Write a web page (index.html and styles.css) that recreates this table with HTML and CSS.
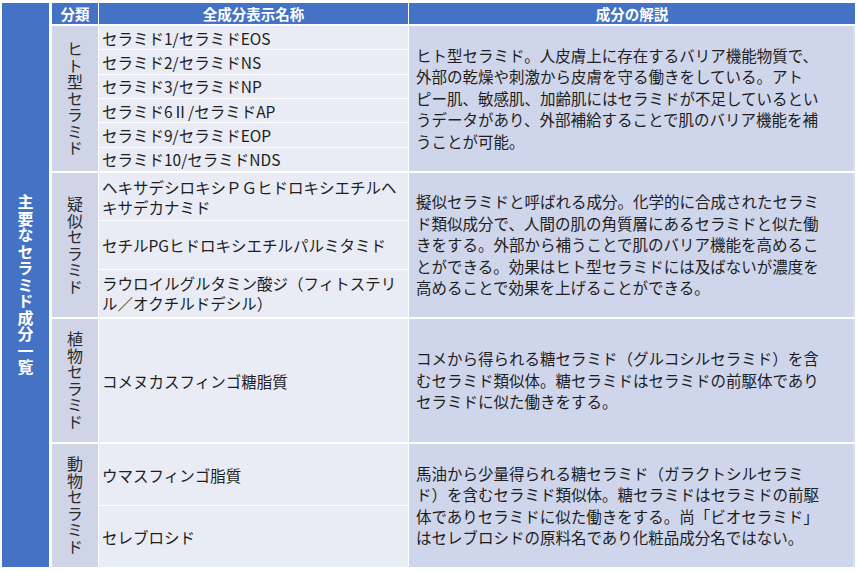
FILE: index.html
```html
<!DOCTYPE html>
<html lang="ja">
<head>
    <meta charset="UTF-8">
    <title>主要なセラミド成分一覧</title>
    <link rel="stylesheet" href="styles.css">
</head>
<body>

<div class="sheet">
    <div class="title"><span>主要なセラミド成分一覧</span></div>

    <div class="table">
        <div class="row head">
            <div class="cat">分類</div>
            <div class="names">全成分表示名称</div>
            <div class="desc">成分の解説</div>
        </div>

        <div class="row group human">
            <div class="cat"><span>ヒト型セラミド</span></div>
            <div class="names">
                <div class="item">セラミド1/セラミドEOS</div>
                <div class="item">セラミド2/セラミドNS</div>
                <div class="item">セラミド3/セラミドNP</div>
                <div class="item">セラミド6Ⅱ/セラミドAP</div>
                <div class="item">セラミド9/セラミドEOP</div>
                <div class="item">セラミド10/セラミドNDS</div>
            </div>
            <div class="desc">
                <p>ヒト型セラミド。人皮膚上に存在するバリア機能物質で、<br>外部の乾燥や刺激から皮膚を守る働きをしている。アト<br>ピー肌、敏感肌、加齢肌にはセラミドが不足しているとい<br>うデータがあり、外部補給することで肌のバリア機能を補<br>うことが可能。</p>
            </div>
        </div>

        <div class="row group pseudo">
            <div class="cat"><span>疑似セラミド</span></div>
            <div class="names">
                <div class="item">ヘキサデシロキシＰＧヒドロキシエチルヘ<br>キサデカナミド</div>
                <div class="item">セチルPGヒドロキシエチルパルミタミド</div>
                <div class="item">ラウロイルグルタミン酸ジ（フィトステリ<br>ル／オクチルドデシル）</div>
            </div>
            <div class="desc">
                <p>擬似セラミドと呼ばれる成分。化学的に合成されたセラミ<br>ド類似成分で、人間の肌の角質層にあるセラミドと似た働<br>きをする。外部から補うことで肌のバリア機能を高めるこ<br>とができる。効果はヒト型セラミドには及ばないが濃度を<br>高めることで効果を上げることができる。</p>
            </div>
        </div>

        <div class="row group plant">
            <div class="cat"><span>植物セラミド</span></div>
            <div class="names">
                <div class="item">コメヌカスフィンゴ糖脂質</div>
            </div>
            <div class="desc">
                <p>コメから得られる糖セラミド（グルコシルセラミド）を含<br>むセラミド類似体。糖セラミドはセラミドの前駆体であり<br>セラミドに似た働きをする。</p>
            </div>
        </div>

        <div class="row group animal">
            <div class="cat"><span>動物セラミド</span></div>
            <div class="names">
                <div class="item">ウマスフィンゴ脂質</div>
                <div class="item">セレブロシド</div>
            </div>
            <div class="desc">
                <p>馬油から少量得られる糖セラミド（ガラクトシルセラミ<br>ド）を含むセラミド類似体。糖セラミドはセラミドの前駆<br>体でありセラミドに似た働きをする。尚「ビオセラミド」<br>はセレブロシドの原料名であり化粧品成分名ではない。</p>
            </div>
        </div>
    </div>
</div>

</body>
</html>
```

FILE: styles.css
```css
body {
    margin: 0;
    padding: 0;
    background-color: #ffffff;
    font-family: "Noto Sans CJK JP", "Noto Sans", sans-serif;
    color: #1e1e1e;
    font-size: 15.5px;
}

.sheet {
    display: flex;
    padding: 3px 0 0 2px;
    height: 564px;
}

/* left title bar */
.title {
    width: 47px;
    background-color: #4472c4;
    color: #ffffff;
    font-weight: bold;
    font-size: 16px;
    display: flex;
    align-items: center;
    justify-content: center;
}

.title span {
    writing-mode: vertical-rl;
    letter-spacing: 0.5px;
}

.table {
    margin-left: 3px;
    display: flex;
    flex-direction: column;
    gap: 2px;
}

.row {
    display: flex;
    gap: 1px;
}

.cat {
    width: 46px;
}

.names {
    width: 309px;
}

.desc {
    width: 446px;
}

/* header */
.head {
    height: 21px;
}

.head > div {
    background-color: #4472c4;
    color: #ffffff;
    font-weight: bold;
    font-size: 14.5px;
    line-height: 21px;
    text-align: center;
}

/* body rows */
.human { height: 145px; }
.pseudo { height: 144px; }
.plant { height: 123px; }
.animal { height: 123px; }

.group .cat {
    background-color: #cfd4e6;
    display: flex;
    align-items: center;
    justify-content: center;
    color: #2a2a2a;
}

.group .cat span {
    writing-mode: vertical-rl;
    letter-spacing: 0.5px;
    font-size: 16px;
}

.group .names {
    display: flex;
    flex-direction: column;
    gap: 1px;
}

.item {
    flex: 1;
    background-color: #e9ebf5;
    display: flex;
    align-items: center;
    padding-left: 3px;
    line-height: 20px;
    white-space: nowrap;
}

.group .desc {
    background-color: #cfd5ea;
    display: flex;
    align-items: center;
    padding-left: 7px;
    box-sizing: border-box;
    border-right: 2px solid #d9e1ec;
}

.desc p {
    margin: 0;
    line-height: 21.5px;
    white-space: nowrap;
}
```
